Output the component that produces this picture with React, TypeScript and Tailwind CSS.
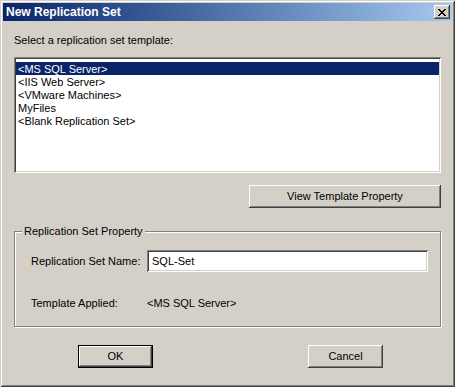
import React from "react";

const raised =
  "shadow-[inset_-1px_-1px_#404040,inset_1px_1px_#ffffff,inset_-2px_-2px_#808080,inset_2px_2px_#d4d0c8]";
const sunken =
  "shadow-[inset_1px_1px_#808080,inset_-1px_-1px_#ffffff,inset_2px_2px_#404040,inset_-2px_-2px_#d4d0c8]";

function Btn({ label, def, w }: { label: string; def?: boolean; w: string }) {
  return (
    <div
      className={`${w} h-[23px] flex items-center justify-center bg-[#d4d0c8] text-[11px] text-black ${
        def
          ? "border border-black shadow-[inset_-1px_-1px_#404040,inset_1px_1px_#ffffff,inset_-2px_-2px_#808080]"
          : raised
      }`}
    >
      {label}
    </div>
  );
}

export default function App() {
  const items = [
    "<MS SQL Server>",
    "<IIS Web Server>",
    "<VMware Machines>",
    "MyFiles",
    "<Blank Replication Set>",
  ];
  return (
    <div
      className="w-[455px] h-[387px] bg-[#d4d0c8] p-[3px] flex flex-col shadow-[inset_1px_1px_#d4d0c8,inset_-1px_-1px_#404040,inset_2px_2px_#ffffff,inset_-2px_-2px_#808080]"
      style={{ fontFamily: '"Liberation Sans", Arial, sans-serif' }}
    >
      {/* Title bar */}
      <div className="h-[18px] flex items-center justify-between bg-gradient-to-r from-[#0a246a] to-[#a6caf0] pl-[3px] pr-[2px]">
        <span className="text-white font-bold text-[12px] leading-none">
          New Replication Set
        </span>
        <div className={`w-[16px] h-[14px] bg-[#d4d0c8] flex items-center justify-center ${raised}`}>
          <svg width="8" height="7" viewBox="0 0 8 7" shapeRendering="crispEdges">
            <path
              d="M0 0h2v1h-2zM6 0h2v1h-2zM1 1h2v1h-2zM5 1h2v1h-2zM2 2h4v1h-4zM3 3h2v1h-2zM2 4h4v1h-4zM1 5h2v1h-2zM5 5h2v1h-2zM0 6h2v1h-2zM6 6h2v1h-2z"
              fill="#000"
            />
          </svg>
        </div>
      </div>

      <div className="flex flex-col px-[11px] text-[11px] text-black">
        <div className="mt-[13px] h-[13px] leading-[13px]">Select a replication set template:</div>

        {/* List box */}
        <div className={`mt-[10px] h-[116px] bg-white p-[2px] ${sunken}`}>
          <div className="pt-[3px] flex flex-col">
            {items.map((it, i) => (
              <div
                key={it}
                className={`h-[13px] leading-[14px] px-[2px] ${
                  i === 0 ? "bg-[#0a246a] text-white" : "text-black"
                }`}
              >
                {it}
              </div>
            ))}
          </div>
        </div>

        <div className="mt-[12px] flex justify-end">
          <Btn label="View Template Property" w="w-[192px]" />
        </div>

        {/* Group box */}
        <div className="mt-[23px] relative h-[96px] border border-[#808080] shadow-[1px_1px_#ffffff,inset_1px_1px_#ffffff]">
          <div className="absolute left-[7px] top-[-7px] bg-[#d4d0c8] px-[2px] leading-[13px]">
            Replication Set Property
          </div>
          <div className="flex items-center mt-[18px] ml-[16px]">
            <div className="w-[116px]">Replication Set Name:</div>
            <div className={`w-[281px] h-[22px] bg-white flex items-center px-[5px] ${sunken}`}>
              SQL-Set
            </div>
          </div>
          <div className="flex items-center mt-[23px] ml-[16px]">
            <div className="w-[116px]">Template Applied:</div>
            <div>&lt;MS SQL Server&gt;</div>
          </div>
        </div>

        {/* Buttons */}
        <div className="mt-[18px] flex">
          <div className="ml-[64px]">
            <Btn label="OK" def w="w-[75px]" />
          </div>
          <div className="ml-[155px]">
            <Btn label="Cancel" w="w-[75px]" />
          </div>
        </div>
      </div>
    </div>
  );
}
